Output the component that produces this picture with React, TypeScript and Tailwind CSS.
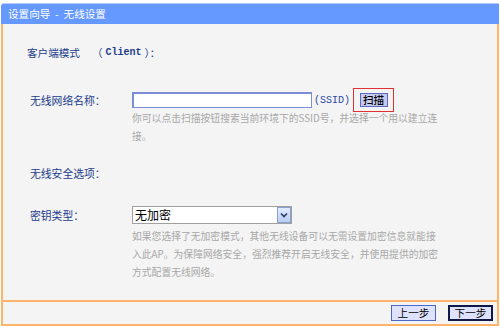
import React from 'react';

const font = { fontFamily: '"Noto Sans CJK SC", "Noto Sans", sans-serif' };

const Label = ({ children }: { children: React.ReactNode }) => (
  <div className="w-[129px] pl-[27px] text-[10.8px] text-[#1c3c8c] leading-[18px] shrink-0 whitespace-nowrap">{children}</div>
);

const Help = ({ lines }: { lines: string[] }) => (
  <div className="pl-[129px] text-[9.8px] text-[#a8a8a8] leading-[18px]">
    {lines.map((l) => (
      <div key={l} className="whitespace-nowrap">{l}</div>
    ))}
  </div>
);

export default function App() {
  return (
    <div className="w-[500px] h-[329px] bg-white pt-[3px] pl-px" style={font}>
      <div className="w-[498px]">
        {/* title bar */}
        <div className="h-[21px] bg-[#6699ff] border-t border-[#b8cdfd] rounded-tl-[3px] pl-[7px] flex items-center text-white text-[10.6px] whitespace-pre">
          设置向导  -  无线设置
        </div>

        {/* body */}
        <div className="h-[278px] bg-[#f4f4f4] border-x-2 border-[#ffb469] border-b-2 flex flex-col">
          <div className="pt-[20px] pl-[24px] text-[10.6px] text-[#1c3c8c] leading-[18px] flex items-center whitespace-nowrap">
            <span>客户端模式</span>
            <span className="ml-[12px] mr-[3px]">（</span>
            <span className="font-['Liberation_Mono'] text-[10px] font-bold">Client</span>
            <span className="ml-[3px]">）：</span>
          </div>

          <div className="mt-[26px] flex items-center h-[24px]">
            <Label>无线网络名称：</Label>
            <div className="w-[180px] h-[16px] bg-white border-2 border-[#7b8ed8] border-b border-r" />
            <span className="ml-[2px] text-[10px] text-[#2848a8] font-['Liberation_Mono']">(SSID)</span>
            <div className="ml-[3px] h-[24px] w-[41px] border border-[#e03030] flex items-center justify-center">
              <div className="h-[14px] w-[28px] bg-[#c6caf2] border border-[#5a6ac0] flex items-center justify-center text-[10.6px] text-black font-medium leading-none">
                扫描
              </div>
            </div>
          </div>

          <div className="mt-[-3px]">
            <Help lines={['你可以点击扫描按钮搜索当前环境下的SSID号，并选择一个用以建立连', '接。']} />
          </div>

          <div className="mt-[19px] flex">
            <Label>无线安全选项：</Label>
          </div>

          <div className="mt-[24px] flex items-center h-[18px]">
            <Label>密钥类型：</Label>
            <div className="w-[160px] h-[18px] bg-white border border-[#a0a0a0] flex items-center justify-between">
              <span className="pl-[2px] text-[12px] text-black leading-none">无加密</span>
              <div className="h-[16px] w-[14px] bg-gradient-to-b from-[#e2ecfc] to-[#b8cdf4] border border-[#8aa0d0] flex items-center justify-center">
                <svg width="8" height="6" viewBox="0 0 8 6">
                  <path d="M1 1.5 L4 4.5 L7 1.5" fill="none" stroke="#2a3a6a" strokeWidth="1.6" />
                </svg>
              </div>
            </div>
          </div>

          <div className="mt-[3px]">
            <Help
              lines={[
                '如果您选择了无加密模式，其他无线设备可以无需设置加密信息就能接',
                '入此AP。为保障网络安全，强烈推荐开启无线安全，并使用提供的加密',
                '方式配置无线网络。',
              ]}
            />
          </div>
        </div>

        {/* footer */}
        <div className="h-[24px] bg-[#f4f4f4] border-x-2 border-b-2 border-[#ffb469] flex items-center justify-end pr-[4px] gap-[12px]">
          <button className="w-[45px] h-[16px] bg-[#dfe2fc] border border-[#4a66c8] text-[10.6px] text-black leading-none flex items-center justify-center">
            上一步
          </button>
          <button className="w-[45px] h-[16px] bg-[#dfe2fc] border-2 border-[#101848] text-[10.6px] text-black leading-none flex items-center justify-center">
            下一步
          </button>
        </div>
      </div>
    </div>
  );
}
